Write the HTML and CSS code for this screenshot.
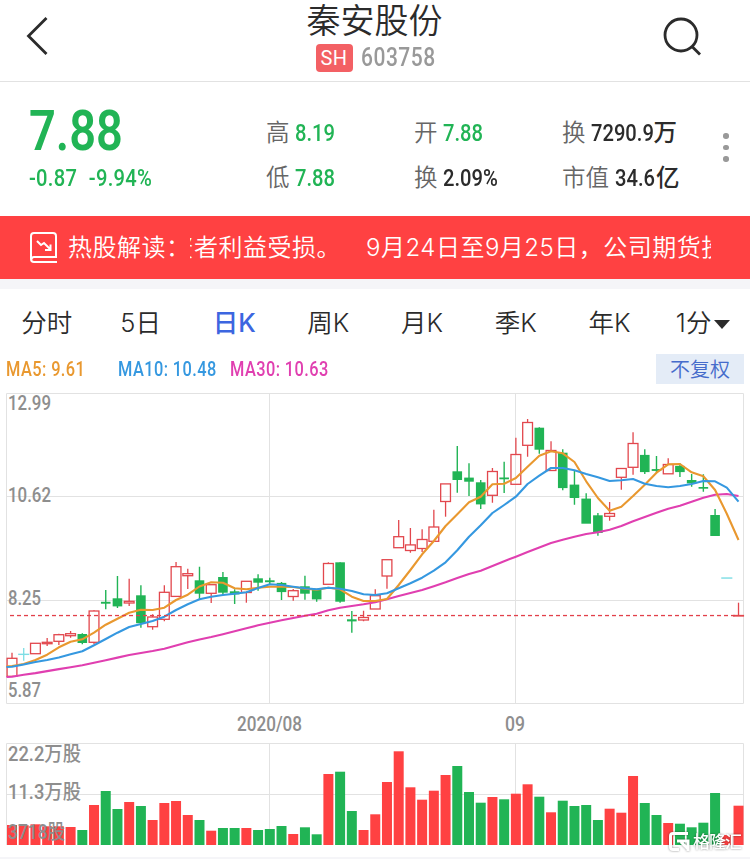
FILE: index.html
```html
<!DOCTYPE html>
<html lang="zh-CN">
<head>
    <meta charset="UTF-8">
    <meta name="viewport" content="width=device-width, initial-scale=1.0">
    <title>秦安股份 603758</title>
    <link rel="stylesheet" href="styles.css">
</head>
<body>
    <header class="app-header">
        <svg class="back-icon" width="24" height="40" viewBox="0 0 24 40">
            <path d="M20.500 2L2.500 20L20.500 38"/>
        </svg>
        <div class="title">
            <h1>秦安股份</h1>
            <div class="code"><span class="market">SH</span><span class="num code-num">603758</span></div>
        </div>
        <svg class="search-icon" width="40" height="40" viewBox="0 0 40 40">
            <circle cx="18" cy="18" r="16"/>
            <path d="M29 29.500L37 37.500"/>
        </svg>
    </header>

    <section class="quote">
        <div class="price-box">
            <div class="price num">7.88</div>
            <div class="change num"><span>-0.87</span><span>-9.94%</span></div>
        </div>
        <div class="stats">
            <p>高<span class="num green">8.19</span></p>
            <p>低<span class="num green">7.88</span></p>
        </div>
        <div class="stats">
            <p>开<span class="num green">7.88</span></p>
            <p>换<span class="num">2.09%</span></p>
        </div>
        <div class="stats">
            <p>换<span class="num w-volume">7290.9</span><b>万</b></p>
            <p>市值<span class="num w-cap">34.6</span><b>亿</b></p>
        </div>
        <div class="more"><i></i><i></i><i></i></div>
    </section>

    <section class="news">
        <svg class="news-icon" width="28" height="32" viewBox="0 0 28 32">
            <path d="M27 30H4a3 3 0 0 1-3-3V4a3 3 0 0 1 3-3h19a3 3 0 0 1 3 3v21H4a2.500 2.500 0 0 0-2.500 2.500"/>
            <path d="M7 9l4 4 3-2 6 6M20.500 12.500V18H15"/>
        </svg>
        <span class="news-label">热股解读：</span>
        <div class="marquee"><span>资者利益受损。</span><span>9月24日至9月25日，公司期货投资</span></div>
    </section>

    <nav class="tabs">
        <a>分时</a>
        <a>5日</a>
        <a class="active">日K</a>
        <a>周K</a>
        <a>月K</a>
        <a>季K</a>
        <a>年K</a>
        <a>1分<i class="arrow"></i></a>
    </nav>

    <div class="legend">
        <span class="num ma5">MA5: 9.61</span>
        <span class="num ma10">MA10: 10.48</span>
        <span class="num ma30">MA30: 10.63</span>
        <button class="adjust">不复权</button>
    </div>

    <main class="chart-area">
        <svg id="chart" width="750" height="469" viewBox="0 390 750 469"></svg>
    </main>

    <script src="chart.js"></script>
</body>
</html>
```
FILE: styles.css
```css
* {
    margin: 0;
    padding: 0;
    box-sizing: border-box;
}

body {
    width: 750px;
    height: 859px;
    overflow: hidden;
    background: #fff;
    color: #2b2b2b;
    font-family: Inter, "Noto Sans CJK SC", sans-serif;
}

/* narrow digits */
.num {
    display: inline-block;
    font-family: Roboto, sans-serif;
    font-weight: 500;
    transform: scaleX(0.84);
    transform-origin: left center;
    white-space: nowrap;
}

.green {
    color: #21b455;
}

/* header */
.app-header {
    height: 82px;
    padding: 0 47px 0 26px;
    display: flex;
    justify-content: space-between;
    border-bottom: 1px solid #e2e2e2;
}

.app-header svg {
    fill: none;
    stroke: #2b2b2b;
    stroke-width: 2.8;
}

.back-icon {
    margin-top: 16px;
}

.search-icon {
    margin-top: 17px;
}

.title {
    width: 136px;
    margin-left: 36px;
}

.title h1 {
    font-size: 34px;
    font-weight: 350;
    line-height: 41px;
    white-space: nowrap;
}

.code {
    display: flex;
    align-items: center;
    margin: 3px 0 0 9px;
    height: 28px;
}

.market {
    width: 37px;
    height: 28px;
    line-height: 28px;
    border-radius: 4px;
    background: #f36064;
    color: #fff;
    font-family: Roboto, sans-serif;
    font-size: 20px;
    text-align: center;
    letter-spacing: 0.5px;
}

.code-num {
    margin-left: 8px;
    font-size: 25px;
    letter-spacing: 0.6px;
    line-height: 26px;
    color: #999;
    width: 76px;
}

/* quote */
.quote {
    height: 134px;
    display: flex;
    padding-left: 29px;
}

.price-box {
    width: 237px;
    color: #21b455;
}

.price {
    margin-top: 22px;
    font-size: 56px;
    font-weight: 600;
    line-height: 55px;
    display: block;
}

.change {
    display: block;
    margin-top: 5px;
    font-size: 24px;
    line-height: 28px;
    letter-spacing: 0.3px;
}

.change span {
    margin-right: 14px;
}

.stats {
    width: 148px;
    padding-top: 28px;
    font-size: 23.5px;
    color: #666;
    font-weight: 350;
}

.stats p {
    height: 45px;
    line-height: 45px;
    white-space: nowrap;
    display: flex;
}

.stats .num {
    margin-left: 5px;
    padding-top: 1px;
    font-size: 24px;
    color: #2b2b2b;
}

.stats .num.green {
    color: #21b455;
}

.stats b {
    font-weight: 500;
    color: #2b2b2b;
}

.stats .w-volume {
    width: 63px;
}

.stats .w-cap {
    width: 41px;
    margin-left: 6px;
}

.more {
    width: 6px;
    margin: 51px 0 0 13px;
    display: flex;
    flex-direction: column;
    gap: 6px;
}

.more i {
    width: 5.5px;
    height: 5.5px;
    border-radius: 50%;
    background: #999;
}

/* news bar */
.news {
    height: 73px;
    padding: 0 39px 0 30px;
    display: flex;
    align-items: center;
    background: #ff4142;
    border-bottom: 10px solid #f5f5f8;
    color: #fff;
    font-size: 24px;
    font-weight: 350;
    line-height: 36px;
    letter-spacing: 0.5px;
    white-space: nowrap;
}

.news-icon {
    fill: none;
    stroke: #fff;
    stroke-width: 2;
}

.news-label {
    width: 122px;
    margin: 1px 0 0 10px;
    overflow: hidden;
}

.marquee {
    flex: 1;
    margin-top: 1px;
    display: flex;
    gap: 25px;
    overflow: hidden;
}

.marquee span:first-child {
    margin-left: -20.5px;
}

/* period tabs */
.tabs {
    height: 65px;
    display: flex;
}

.tabs a {
    flex: 1;
    text-align: center;
    font-size: 25.5px;
    font-weight: 350;
    line-height: 68px;
}

.tabs .active {
    color: #3c66e0;
    font-weight: 500;
}

.arrow {
    display: inline-block;
    margin-left: 3px;
    vertical-align: 3px;
    border: 8px solid transparent;
    border-top: 9px solid #2b2b2b;
    border-bottom: 0;
}

/* MA legend */
.legend {
    height: 36px;
    padding: 0 6px;
    display: flex;
    font-size: 19.5px;
    line-height: 31px;
    letter-spacing: 0.5px;
}

.ma5 {
    width: 112px;
    color: #e9982f;
}

.ma10 {
    width: 112px;
    color: #3598e0;
}

.ma30 {
    color: #e03fb0;
}

.adjust {
    width: 88px;
    height: 30px;
    margin-left: auto;
    border: none;
    background: #e4ecf7;
    color: #456bcb;
    font-family: "Noto Sans CJK SC", sans-serif;
    font-size: 20px;
    font-weight: 350;
    line-height: 28px;
}

/* chart */
.chart-area svg {
    display: block;
}

.grid {
    stroke: #e2e2e2;
    stroke-width: 1;
    fill: none;
}

.last-price {
    fill: #e2404a;
}

.up {
    fill: none;
    stroke: #e2474d;
    stroke-width: 1.3;
}

.down {
    fill: #21b455;
    stroke: #21b455;
    stroke-width: 1.4;
}

.flat {
    fill: none;
    stroke: #7cdde4;
    stroke-width: 1.3;
}

.vol-up {
    fill: #ff4142;
}

.vol-down {
    fill: #21b455;
}

.line {
    fill: none;
    stroke-width: 2.1;
    stroke-linejoin: round;
}

.line5 {
    stroke: #e9982f;
}

.line10 {
    stroke: #3598e0;
}

.line30 {
    stroke: #e03fb0;
}

.axis {
    fill: #8e8e8e;
    font-family: Roboto, "Noto Sans CJK SC", sans-serif;
    font-size: 20px;
    font-weight: 500;
}

.brand {
    filter: drop-shadow(0 0 1px rgba(0, 0, 0, 0.45));
}

.brand path {
    fill: none;
    stroke: #fff;
    stroke-width: 3;
}

.brand text {
    fill: #fff;
    font-family: "Noto Sans CJK SC", sans-serif;
    font-size: 17px;
    font-weight: 500;
}
```
FILE: chart.js
```js
const STEP = 11.718;
const FIRST = 12;
const BASE = 845;

// type, high, body top, body bottom, low, volume top
const candles = [
    ['u', 652.7, 658.3, 676.3, 676.3, 825],
    ['f', 648, 654.3, 654.3, 660.7, 825.3],
    ['u', 643.3, 643.3, 653.7, 653.7, 824.3],
    ['u', 638, 642.3, 643.7, 646, 826.3],
    ['u', 633.7, 634.7, 641.3, 645, 826.3],
    ['u', 631, 633.7, 635.7, 637.7, 827],
    ['d', 633.3, 634.7, 642.3, 644.3, 830],
    ['u', 610.3, 611, 642.3, 644, 805],
    ['d', 590, 602.5, 603, 609.3, 791],
    ['d', 576, 599, 605.7, 608, 809],
    ['u', 578.7, 601.3, 603, 606, 802],
    ['d', 585.3, 596, 622.5, 627.7, 806],
    ['u', 614.3, 617, 626.7, 629.7, 820],
    ['u', 585.3, 592.3, 619.3, 621.3, 803],
    ['u', 562, 566.7, 596.4, 596.4, 801],
    ['u', 568.7, 573.7, 575.7, 589, 815],
    ['d', 566.7, 581, 593, 599.3, 820],
    ['u', 584.7, 584.7, 593.3, 603, 830.7],
    ['d', 572, 577.7, 592, 595, 828],
    ['d', 589.3, 592, 593.7, 604, 828],
    ['u', 581.3, 581.3, 592.5, 602.7, 828],
    ['d', 574.3, 579, 582, 590.7, 830],
    ['d', 577.7, 581, 581.5, 584.3, 829],
    ['d', 582, 583.6, 591.4, 600, 826],
    ['u', 589, 590.7, 596.5, 600.7, 834],
    ['d', 575.7, 587, 593, 599.7, 827.3],
    ['d', 589, 590.6, 598.7, 601.7, 834.3],
    ['u', 562.3, 563.5, 584.3, 584.3, 774],
    ['d', 562.3, 563, 601, 602.7, 771.7],
    ['d', 611, 620, 620.7, 632.7, 811],
    ['u', 610.7, 617.5, 620, 621.3, 830],
    ['u', 589.3, 595.7, 609, 609, 814.3],
    ['u', 559.7, 559.7, 576, 588.7, 782],
    ['u', 520, 536.7, 547.7, 547.7, 751.3],
    ['u', 528, 544.9, 550.5, 552.7, 787.3],
    ['u', 529.3, 539.5, 548.5, 552, 799.7],
    ['u', 509.7, 527, 541.3, 541.3, 790.7],
    ['u', 483.9, 483.9, 501.5, 516.7, 775],
    ['d', 446, 472, 479.3, 492.7, 766],
    ['d', 463.3, 478.3, 481, 496, 792],
    ['d', 480, 483, 503.7, 509, 802.7],
    ['u', 468, 471.5, 495.3, 502.7, 797],
    ['d', 461.7, 478.2, 478.6, 493, 799.3],
    ['u', 437.7, 454.5, 484.3, 484.3, 793.7],
    ['u', 419, 422.5, 445.3, 456.7, 784.3],
    ['d', 427.3, 428.4, 449, 453.7, 796.7],
    ['u', 441.3, 450.5, 470.5, 470.5, 812.3],
    ['d', 449.3, 453.4, 487.4, 490.3, 800.7],
    ['d', 470, 485.3, 497.3, 504.7, 806],
    ['d', 493.3, 499.3, 523, 523, 805],
    ['d', 513, 516, 532.3, 535.7, 820],
    ['u', 502, 513.5, 516.3, 520.7, 808.7],
    ['u', 468.5, 468.5, 477.3, 489.7, 812.7],
    ['u', 432.3, 443.5, 467.3, 474.7, 776],
    ['d', 449.3, 455.6, 471.4, 474, 803],
    ['d', 456, 469.8, 470.2, 473.3, 815],
    ['u', 458.3, 464.5, 473.8, 473.8, 823],
    ['d', 463.3, 466.6, 471.4, 477, 823.7],
    ['d', 474, 480.7, 482.7, 486.7, 827.3],
    ['d', 474.3, 487.7, 488, 491.7, 822.7],
    ['d', 509, 515.7, 535.3, 536, 793],
    ['f', 578, 578, 578, 578, 835],
    ['u', 602.7, 615.5, 616, 616, 805.7]
];

const ma5 = [666, 664, 660, 654.7, 647.3, 641.7, 639.3, 632.7, 624.7, 618.7, 612.7, 609.7, 610, 607.7, 600, 594.7,
    586.5, 582.3, 582.7, 588.3, 589.3, 587.7, 586.7, 586.7, 587, 588.7, 589.7, 587.7, 589.3, 596.7, 601, 601,
    599, 585, 570, 554.3, 541, 526, 514.3, 502.3, 496.7, 484.3, 483.7, 478, 466.7, 455.7, 451.3, 453.3,
    462, 481.3, 498, 510.7, 506.7, 496, 484.7, 472.7, 464.3, 464, 472.3, 476.3, 490, 513.7, 540];

const ma10 = [666.7, 664.5, 662, 660, 657.5, 654.3, 651.3, 645.3, 639, 632.7, 627, 624, 621, 616.7, 610, 604.3,
    599.3, 596.7, 595, 593.7, 592.3, 588, 584.3, 585, 586.7, 588.3, 589.3, 587.7, 588.7, 591, 594.3, 595,
    593.3, 588.3, 583.3, 577.7, 570.7, 562.3, 550.3, 536.7, 525.3, 513, 505, 496.7, 484, 475.7, 468, 468,
    470.3, 474, 477.3, 481, 480.3, 479, 483.7, 486, 487.3, 486, 484, 481, 481.3, 487.7, 501.7];

const ma30 = [676.7, 674.8, 673.1, 671.1, 669.1, 667.2, 665.3, 662.7, 660.2, 657.6, 655, 653, 651, 648.7, 645.5, 642.3,
    639.5, 637, 634.2, 631.3, 628.3, 625.3, 622.7, 620.3, 618, 615.8, 613.7, 610.2, 607.7, 606, 604.3, 602.3,
    599.3, 596, 593, 590, 586.2, 582.3, 578.1, 574, 570.7, 566, 561.2, 556.7, 552, 547.5, 543, 539.7,
    536.7, 534, 532.3, 529.7, 526, 521.3, 517, 512.8, 508.7, 505.7, 501.7, 497.7, 494.7, 494, 496];

const x = i => FIRST + STEP * i;
let svg = '';

// grid
svg += '<path class="grid" d="M6.500 393.500H743.500V703.500H6.500ZM6.500 496.500H743.500M6.500 600.500H743.500M269.500 393.500V703.500M515.500 393.500V703.500"/>';
svg += '<path class="grid" d="M6.500 845V743.500H743.500V845M6.500 794.500H743.500M269.500 743.500V845M515.500 743.500V845"/>';
svg += '<rect x="0" y="857" width="750" height="2" fill="#f5f5f8"/>';

// candles and volume
candles.forEach((c, i) => {
    const [type, high, top, bottom, low, vol] = c;
    const cx = x(i);
    const cls = { u: 'up', d: 'down', f: 'flat' }[type];
    const half = type === 'd' ? 4.1 : 4.9;
    svg += `<g class="${cls}"><path d="M${cx} ${high}V${top}M${cx} ${bottom}V${low}"/>`;
    svg += `<rect x="${cx - half}" y="${top}" width="${half * 2}" height="${Math.max(bottom - top, 0.1)}"/></g>`;
    svg += `<rect class="${type === 'd' ? 'vol-down' : 'vol-up'}" x="${cx - 5}" y="${vol}" width="10" height="${BASE - vol}"/>`;
});

// moving averages
[[ma30, 'line30'], [ma5, 'line5'], [ma10, 'line10']].forEach(([data, cls]) => {
    const start = `6.500,${data[0] + 0.3} `;
    svg += `<polyline class="line ${cls}" points="${start}${data.map((y, i) => x(i) + ',' + y).join(' ')}"/>`;
});

// last price
for (let dx = 10; dx < 738; dx += 7) {
    svg += `<rect class="last-price" x="${dx}" y="614.9" width="4" height="1.3"/>`;
}

// axis labels
const label = (text, lx, ly, width) =>
    `<text class="axis" x="${lx}" y="${ly}" textLength="${width}" lengthAdjust="spacingAndGlyphs">${text}</text>`;
svg += label('12.99', 8, 410, 43);
svg += label('10.62', 8, 502, 43);
svg += label('8.25', 8, 605, 33);
svg += label('5.87', 8, 697, 33);
svg += label('2020/08', 237, 731, 65);
svg += label('09', 505, 731, 20);
svg += label('22.2万股', 8, 760.5, 73);
svg += label('11.3万股', 8, 799, 73);
svg += label('3718股', 8, 839, 57);

// brand mark
svg += '<g class="brand"><path d="M688 833.500H673Q670.500 833.500 670.500 836V847Q670.500 849.500 673 849.500H679M677 841H688V851M681 842L688 849"/>';
svg += '<text x="693" y="848" textLength="49">格隆汇</text></g>';

document.getElementById('chart').innerHTML = svg;
```
